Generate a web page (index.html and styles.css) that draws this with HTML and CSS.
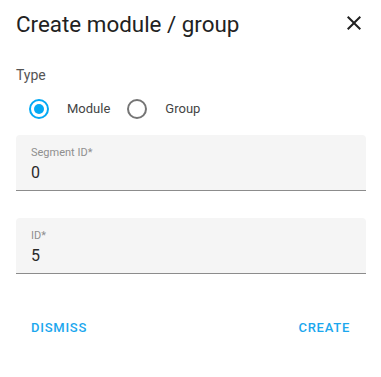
FILE: index.html
```html
<!DOCTYPE html>
<html lang="en">
<head>
<meta charset="utf-8">
<title>Create module / group</title>
<link rel="stylesheet" href="styles.css">
</head>
<body>
<div class="dialog">
  <div class="header">
    <h2 class="title">Create module / group</h2>
    <button class="close" aria-label="Close">
      <svg width="24" height="24" viewBox="0 0 24 24"><path d="M19 6.41L17.59 5 12 10.59 6.41 5 5 6.41 10.59 12 5 17.59 6.41 19 12 13.41 17.59 19 19 17.59 13.41 12z" fill="currentColor"/></svg>
    </button>
  </div>
  <div class="type-label">Type</div>
  <div class="radios">
    <label class="radio checked"><span class="ring"><span class="dot"></span></span><span class="rtext">Module</span></label>
    <label class="radio"><span class="ring"></span><span class="rtext">Group</span></label>
  </div>
  <div class="field first">
    <div class="flabel">Segment ID*</div>
    <div class="fvalue">0</div>
  </div>
  <div class="field second">
    <div class="flabel">ID*</div>
    <div class="fvalue">5</div>
  </div>
  <div class="actions">
    <button class="btn">DISMISS</button>
    <button class="btn">CREATE</button>
  </div>
</div>
</body>
</html>
```
FILE: styles.css
```css
html, body {
  margin: 0;
  padding: 0;
  background: #ffffff;
}
body {
  font-family: Roboto, "Liberation Sans", sans-serif;
  color: #212121;
}
.dialog {
  padding: 10px 15px 0 16px;
}
.header {
  display: flex;
  justify-content: space-between;
  align-items: flex-start;
  height: 29px;
}
.title {
  margin: 0;
  font-size: 22.4px;
  font-weight: 400;
  line-height: 28px;
  color: #222222;
}
.close {
  border: 0;
  background: none;
  padding: 0;
  margin-top: 1px;
  width: 24px;
  height: 24px;
  color: #212121;
  display: block;
}
.close svg { display: block; }
.type-label {
  margin-top: 26px;
  font-size: 14px;
  line-height: 20px;
  color: #555555;
}
.radios {
  margin-top: 14px;
  height: 20px;
  display: flex;
  align-items: center;
  padding-left: 13px;
}
.radio {
  display: flex;
  align-items: center;
  margin-right: 17px;
}
.ring {
  box-sizing: border-box;
  width: 20px;
  height: 20px;
  border-radius: 50%;
  border: 2px solid #757575;
  display: flex;
  align-items: center;
  justify-content: center;
}
.radio.checked .ring {
  border-color: #03a9f4;
}
.dot {
  width: 10px;
  height: 10px;
  border-radius: 50%;
  background: #03a9f4;
}
.rtext {
  margin-left: 18px;
  font-size: 13px;
  line-height: 20px;
  color: #444444;
}
.field {
  box-sizing: border-box;
  height: 56px;
  background: #f5f5f5;
  border-radius: 4px 4px 0 0;
  border-bottom: 1px solid #8c8c8c;
  padding: 11px 15px 0;
}
.field.first { margin-top: 16px; }
.field.second { margin-top: 27px; }
.flabel {
  font-size: 11px;
  line-height: 14px;
  color: #8f8f8f;
}
.fvalue {
  margin-top: 3px;
  font-size: 16px;
  line-height: 19px;
  color: #2a2a2a;
}
.actions {
  margin-top: 42px;
  display: flex;
  justify-content: space-between;
  padding: 0 16px 0 15px;
}
.btn {
  border: 0;
  background: none;
  padding: 0;
  font-family: Roboto, "Liberation Sans", sans-serif;
  font-size: 13px;
  font-weight: 500;
  letter-spacing: 0.75px;
  line-height: 24px;
  color: #1ba7ee;
}
```
